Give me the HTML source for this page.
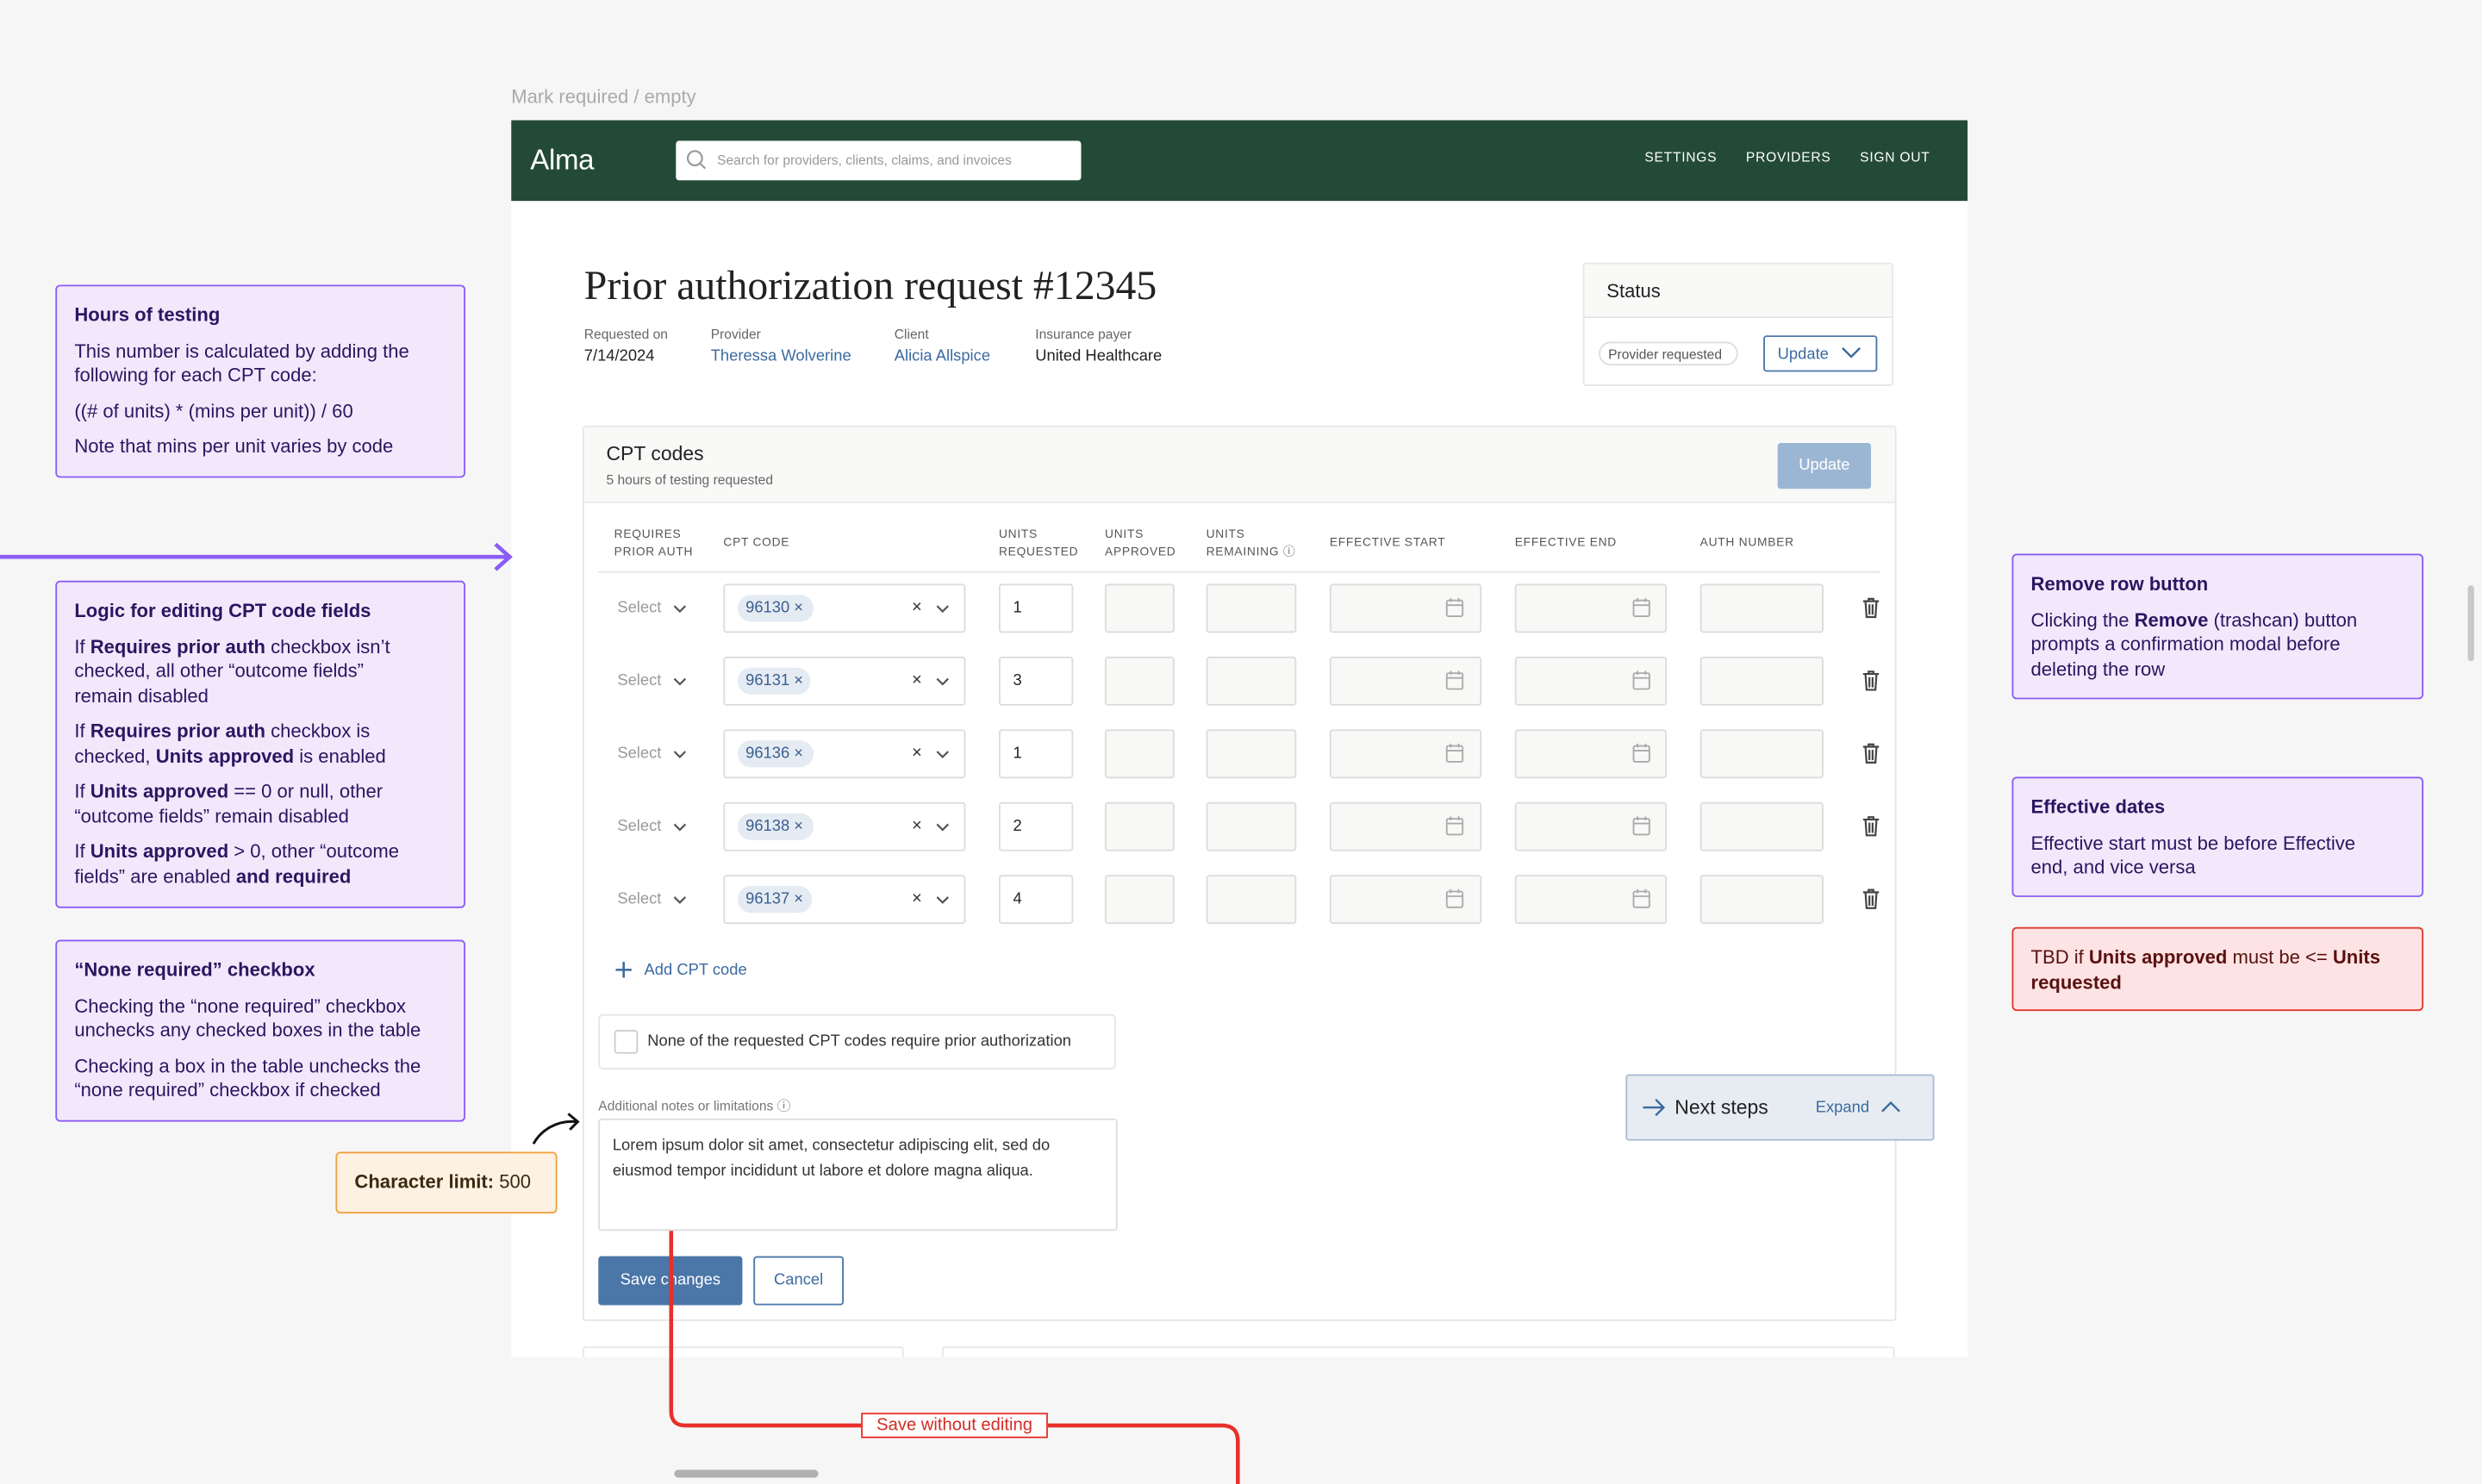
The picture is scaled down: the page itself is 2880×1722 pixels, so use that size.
<!DOCTYPE html>
<html><head><meta charset="utf-8">
<style>
*{box-sizing:border-box;margin:0;padding:0}
html,body{width:2880px;height:1722px;overflow:hidden;background:#f6f6f6}
#w{position:absolute;left:0;top:0;width:1568px;height:938px;transform:scale(1.83674,1.83582);transform-origin:0 0;font-family:"Liberation Sans",sans-serif;color:#222}
.a{position:absolute}
.note{position:absolute;background:#f1e8fc;border:1.5px solid #8b5cf6;border-radius:3px;padding:11px 11px;color:#2a1660;font-size:12px;line-height:15.5px}
.note b{font-weight:bold}
.note .h{font-weight:bold;margin-bottom:7px}
.note p{margin-bottom:7px}
.fld{position:absolute;height:31px;border:1px solid #dcdcdc;border-radius:2px;background:#f8f8f7}
.wh{background:#fff}
.th{position:absolute;font-size:7.5px;letter-spacing:.4px;color:#555;line-height:11px}
.sel{position:absolute;left:390px;top:10px;font-size:10px;color:#999}
.num{position:absolute;left:640px;top:10px;font-size:10px}
</style></head><body><div id="w">

<div class="a" style="left:323px;top:54px;font-size:12px;color:#aaa">Mark required / empty</div>

<div class="a" style="left:323px;top:76px;width:920px;height:782px;background:#fff"></div>
<div class="a" style="left:323px;top:76px;width:920px;height:51px;background:#234a36"></div>
<div class="a" style="left:335px;top:91px;font-size:18px;color:#fff;letter-spacing:-.2px;font-weight:300">Alma</div>
<div class="a" style="left:427px;top:89px;width:256px;height:25px;background:#fff;border-radius:2px"></div>
<svg class="a" style="left:433px;top:94px" width="14" height="14" viewBox="0 0 14 14"><circle cx="6" cy="6" r="4.5" fill="none" stroke="#999" stroke-width="1.2"/><path d="M9.3 9.3L12.5 12.5" stroke="#999" stroke-width="1.2"/></svg>
<div class="a" style="left:453px;top:96px;font-size:8.5px;color:#999">Search for providers, clients, claims, and invoices</div>
<div class="a" style="left:1039px;top:94px;font-size:8.5px;color:#fff;letter-spacing:.4px">SETTINGS</div>
<div class="a" style="left:1103px;top:94px;font-size:8.5px;color:#fff;letter-spacing:.4px">PROVIDERS</div>
<div class="a" style="left:1175px;top:94px;font-size:8.5px;color:#fff;letter-spacing:.4px">SIGN OUT</div>

<div class="a" style="left:369px;top:166px;font-family:'Liberation Serif',serif;font-size:26px;color:#222">Prior authorization request #12345</div>
<div class="a" style="left:369px;top:206px;font-size:8.5px;color:#666">Requested on</div>
<div class="a" style="left:369px;top:220px;font-size:10px">7/14/2024</div>
<div class="a" style="left:449px;top:206px;font-size:8.5px;color:#666">Provider</div>
<div class="a" style="left:449px;top:220px;font-size:10px;color:#3a6aa0">Theressa Wolverine</div>
<div class="a" style="left:565px;top:206px;font-size:8.5px;color:#666">Client</div>
<div class="a" style="left:565px;top:220px;font-size:10px;color:#3a6aa0">Alicia Allspice</div>
<div class="a" style="left:654px;top:206px;font-size:8.5px;color:#666">Insurance payer</div>
<div class="a" style="left:654px;top:220px;font-size:10px">United Healthcare</div>

<div class="a" style="left:1000px;top:166px;width:196px;height:78px;border:1px solid #e6e6e6;border-radius:2px;background:#fff"></div>
<div class="a" style="left:1001px;top:167px;width:194px;height:34px;background:#f9f9f8;border-bottom:1px solid #e6e6e6"></div>
<div class="a" style="left:1015px;top:177px;font-size:12px;color:#222">Status</div>
<div class="a" style="left:1010px;top:216px;width:88px;height:15px;border:1px solid #ddd;border-radius:8px;font-size:8.5px;color:#555;padding:2px 0 0 5px">Provider requested</div>
<div class="a" style="left:1114px;top:212px;width:72px;height:23px;border:1px solid #4a76a8;border-radius:2px;font-size:10px;color:#3a6aa0;padding:6px 0 0 8px">Update</div>
<svg class="a" style="left:1163px;top:218px" width="13" height="10"><path d="M1 2L6.5 7.5L12 2" fill="none" stroke="#3a6aa0" stroke-width="1.3"/></svg>

<div class="a" style="left:368px;top:269px;width:830px;height:566px;border:1px solid #e6e6e6;border-radius:2px;background:#fff"></div>
<div class="a" style="left:369px;top:270px;width:828px;height:48px;background:#f9f9f8;border-bottom:1px solid #e8e8e8"></div>
<div class="a" style="left:383px;top:280px;font-size:12.5px;color:#222">CPT codes</div>
<div class="a" style="left:383px;top:298px;font-size:8.5px;color:#666">5 hours of testing requested</div>
<div class="a" style="left:1123px;top:280px;width:59px;height:29px;background:#9bb6d3;border-radius:2px;color:#fff;font-size:10px;text-align:center;line-height:30px">Update</div>

<div class="th" style="left:388px;top:332px">REQUIRES<br>PRIOR AUTH</div>
<div class="th" style="left:457px;top:337px">CPT CODE</div>
<div class="th" style="left:631px;top:332px">UNITS<br>REQUESTED</div>
<div class="th" style="left:698px;top:332px">UNITS<br>APPROVED</div>
<div class="th" style="left:762px;top:332px">UNITS<br>REMAINING &#9432;</div>
<div class="th" style="left:840px;top:337px">EFFECTIVE START</div>
<div class="th" style="left:957px;top:337px">EFFECTIVE END</div>
<div class="th" style="left:1074px;top:337px">AUTH NUMBER</div>
<div class="a" style="left:378px;top:361px;width:810px;height:1px;background:#e4e4e4"></div>

<svg width="0" height="0" style="position:absolute"><defs>
<g id="cal"><rect x="1" y="2.5" width="10" height="10" rx="1" fill="none" stroke="#aaa" stroke-width="1"/><path d="M1 5.5H11M3.5 1V3.5M8.5 1V3.5" stroke="#aaa" stroke-width="1"/></g>
<g id="tr"><path d="M1 3H11M4.5 3V1.5H7.5V3M2.5 3L3.2 13H8.8L9.5 3M5 5V11.5M7 5V11.5" fill="none" stroke="#444" stroke-width="1.2"/></g>
<g id="chev"><path d="M1 1L4.5 4.5L8 1" fill="none" stroke="#555" stroke-width="1.2"/></g>
</defs></svg>

<div class="a" style="left:0;top:369px;width:1568px;height:31px">
 <div class="sel">Select</div><svg class="a" style="left:425px;top:13px" width="9" height="6"><use href="#chev"/></svg>
 <div class="fld wh" style="left:457px;width:153px"></div>
 <div class="a" style="left:466px;top:7px;width:48px;height:17px;background:#e5ebf3;border-radius:9px;font-size:10px;color:#3a5f8f;padding:3px 0 0 5px">96130 ×</div>
 <div class="a" style="left:576px;top:9px;font-size:11px;color:#333">×</div><svg class="a" style="left:591px;top:13px" width="9" height="6"><use href="#chev"/></svg>
 <div class="fld wh" style="left:631px;width:47px"></div><div class="num">1</div>
 <div class="fld" style="left:698px;width:44px"></div><div class="fld" style="left:762px;width:57px"></div>
 <div class="fld" style="left:840px;width:96px"></div><svg class="a" style="left:913px;top:8px" width="12" height="14"><use href="#cal"/></svg>
 <div class="fld" style="left:957px;width:96px"></div><svg class="a" style="left:1031px;top:8px" width="12" height="14"><use href="#cal"/></svg>
 <div class="fld" style="left:1074px;width:78px"></div><svg class="a" style="left:1176px;top:8px" width="12" height="14"><use href="#tr"/></svg>
</div>
<div class="a" style="left:0;top:415px;width:1568px;height:31px">
 <div class="sel">Select</div><svg class="a" style="left:425px;top:13px" width="9" height="6"><use href="#chev"/></svg>
 <div class="fld wh" style="left:457px;width:153px"></div>
 <div class="a" style="left:466px;top:7px;width:46px;height:17px;background:#e5ebf3;border-radius:9px;font-size:10px;color:#3a5f8f;padding:3px 0 0 5px">96131 ×</div>
 <div class="a" style="left:576px;top:9px;font-size:11px;color:#333">×</div><svg class="a" style="left:591px;top:13px" width="9" height="6"><use href="#chev"/></svg>
 <div class="fld wh" style="left:631px;width:47px"></div><div class="num">3</div>
 <div class="fld" style="left:698px;width:44px"></div><div class="fld" style="left:762px;width:57px"></div>
 <div class="fld" style="left:840px;width:96px"></div><svg class="a" style="left:913px;top:8px" width="12" height="14"><use href="#cal"/></svg>
 <div class="fld" style="left:957px;width:96px"></div><svg class="a" style="left:1031px;top:8px" width="12" height="14"><use href="#cal"/></svg>
 <div class="fld" style="left:1074px;width:78px"></div><svg class="a" style="left:1176px;top:8px" width="12" height="14"><use href="#tr"/></svg>
</div>
<div class="a" style="left:0;top:461px;width:1568px;height:31px">
 <div class="sel">Select</div><svg class="a" style="left:425px;top:13px" width="9" height="6"><use href="#chev"/></svg>
 <div class="fld wh" style="left:457px;width:153px"></div>
 <div class="a" style="left:466px;top:7px;width:48px;height:17px;background:#e5ebf3;border-radius:9px;font-size:10px;color:#3a5f8f;padding:3px 0 0 5px">96136 ×</div>
 <div class="a" style="left:576px;top:9px;font-size:11px;color:#333">×</div><svg class="a" style="left:591px;top:13px" width="9" height="6"><use href="#chev"/></svg>
 <div class="fld wh" style="left:631px;width:47px"></div><div class="num">1</div>
 <div class="fld" style="left:698px;width:44px"></div><div class="fld" style="left:762px;width:57px"></div>
 <div class="fld" style="left:840px;width:96px"></div><svg class="a" style="left:913px;top:8px" width="12" height="14"><use href="#cal"/></svg>
 <div class="fld" style="left:957px;width:96px"></div><svg class="a" style="left:1031px;top:8px" width="12" height="14"><use href="#cal"/></svg>
 <div class="fld" style="left:1074px;width:78px"></div><svg class="a" style="left:1176px;top:8px" width="12" height="14"><use href="#tr"/></svg>
</div>
<div class="a" style="left:0;top:507px;width:1568px;height:31px">
 <div class="sel">Select</div><svg class="a" style="left:425px;top:13px" width="9" height="6"><use href="#chev"/></svg>
 <div class="fld wh" style="left:457px;width:153px"></div>
 <div class="a" style="left:466px;top:7px;width:48px;height:17px;background:#e5ebf3;border-radius:9px;font-size:10px;color:#3a5f8f;padding:3px 0 0 5px">96138 ×</div>
 <div class="a" style="left:576px;top:9px;font-size:11px;color:#333">×</div><svg class="a" style="left:591px;top:13px" width="9" height="6"><use href="#chev"/></svg>
 <div class="fld wh" style="left:631px;width:47px"></div><div class="num">2</div>
 <div class="fld" style="left:698px;width:44px"></div><div class="fld" style="left:762px;width:57px"></div>
 <div class="fld" style="left:840px;width:96px"></div><svg class="a" style="left:913px;top:8px" width="12" height="14"><use href="#cal"/></svg>
 <div class="fld" style="left:957px;width:96px"></div><svg class="a" style="left:1031px;top:8px" width="12" height="14"><use href="#cal"/></svg>
 <div class="fld" style="left:1074px;width:78px"></div><svg class="a" style="left:1176px;top:8px" width="12" height="14"><use href="#tr"/></svg>
</div>
<div class="a" style="left:0;top:553px;width:1568px;height:31px">
 <div class="sel">Select</div><svg class="a" style="left:425px;top:13px" width="9" height="6"><use href="#chev"/></svg>
 <div class="fld wh" style="left:457px;width:153px"></div>
 <div class="a" style="left:466px;top:7px;width:47px;height:17px;background:#e5ebf3;border-radius:9px;font-size:10px;color:#3a5f8f;padding:3px 0 0 5px">96137 ×</div>
 <div class="a" style="left:576px;top:9px;font-size:11px;color:#333">×</div><svg class="a" style="left:591px;top:13px" width="9" height="6"><use href="#chev"/></svg>
 <div class="fld wh" style="left:631px;width:47px"></div><div class="num">4</div>
 <div class="fld" style="left:698px;width:44px"></div><div class="fld" style="left:762px;width:57px"></div>
 <div class="fld" style="left:840px;width:96px"></div><svg class="a" style="left:913px;top:8px" width="12" height="14"><use href="#cal"/></svg>
 <div class="fld" style="left:957px;width:96px"></div><svg class="a" style="left:1031px;top:8px" width="12" height="14"><use href="#cal"/></svg>
 <div class="fld" style="left:1074px;width:78px"></div><svg class="a" style="left:1176px;top:8px" width="12" height="14"><use href="#tr"/></svg>
</div>

<svg class="a" style="left:388px;top:607px" width="12" height="12"><path d="M6 1V11M1 6H11" stroke="#3a6aa0" stroke-width="1.4"/></svg>
<div class="a" style="left:407px;top:608px;font-size:10px;color:#3a6aa0">Add CPT code</div>

<div class="a" style="left:378px;top:641px;width:327px;height:35px;border:1px solid #e6e6e6;border-radius:3px"></div>
<div class="a" style="left:388px;top:651px;width:15px;height:15px;border:1px solid #ccc;border-radius:2px"></div>
<div class="a" style="left:409px;top:653px;font-size:10px;color:#333">None of the requested CPT codes require prior authorization</div>

<div class="a" style="left:378px;top:693px;font-size:8.5px;color:#777">Additional notes or limitations &#9432;</div>
<div class="a" style="left:378px;top:707px;width:328px;height:71px;border:1px solid #ddd;border-radius:2px;padding:9px 8px;font-size:10px;line-height:16px;color:#333">Lorem ipsum dolor sit amet, consectetur adipiscing elit, sed do eiusmod tempor incididunt ut labore et dolore magna aliqua.</div>

<div class="a" style="left:378px;top:794px;width:91px;height:31px;background:#4a76a8;border-radius:2px;color:#fff;font-size:10px;text-align:center;line-height:32px">Save changes</div>
<div class="a" style="left:476px;top:794px;width:57px;height:31px;border:1px solid #4a76a8;border-radius:2px;color:#3a6aa0;font-size:10px;text-align:center;line-height:30px">Cancel</div>

<div class="a" style="left:368px;top:851px;width:203px;height:7px;border:1px solid #e6e6e6;border-bottom:none;border-radius:2px 2px 0 0"></div>
<div class="a" style="left:595px;top:851px;width:602px;height:7px;border:1px solid #e6e6e6;border-bottom:none;border-radius:2px 2px 0 0"></div>

<div class="a" style="left:1027px;top:679px;width:195px;height:42px;background:#e7ebf2;border:1px solid #a9bcd4;border-radius:2px"></div>
<svg class="a" style="left:1037px;top:693px" width="16" height="14"><path d="M1 7H14M9 2L14 7L9 12" fill="none" stroke="#3a6aa0" stroke-width="1.3"/></svg>
<div class="a" style="left:1058px;top:693px;font-size:12.5px;color:#222">Next steps</div>
<div class="a" style="left:1147px;top:695px;font-size:10px;color:#3a6aa0">Expand</div>
<svg class="a" style="left:1188px;top:695px" width="13" height="9"><path d="M1 7.5L6.5 2L12 7.5" fill="none" stroke="#3a6aa0" stroke-width="1.3"/></svg>

<div class="note" style="left:35px;top:180px;width:259px;height:122px">
<div class="h">Hours of testing</div>
<p>This number is calculated by adding the following for each CPT code:</p>
<p>((# of units) * (mins per unit)) / 60</p>
<p>Note that mins per unit varies by code</p></div>

<svg class="a" style="left:0;top:340px" width="330" height="24"><path d="M0 12H322M313 4L322 12L313 20" fill="none" stroke="#8b5cf6" stroke-width="2.5"/></svg>

<div class="note" style="left:35px;top:367px;width:259px;height:207px;padding-right:24px">
<div class="h">Logic for editing CPT code fields</div>
<p>If <b>Requires prior auth</b> checkbox isn’t checked, all other “outcome fields” remain disabled</p>
<p>If <b>Requires prior auth</b> checkbox is checked, <b>Units approved</b> is enabled</p>
<p>If <b>Units approved</b> == 0 or null, other “outcome fields” remain disabled</p>
<p>If <b>Units approved</b> &gt; 0, other “outcome fields” are enabled <b>and required</b></p></div>

<div class="note" style="left:35px;top:594px;width:259px;height:115px">
<div class="h">“None required” checkbox</div>
<p>Checking the “none required” checkbox unchecks any checked boxes in the table</p>
<p>Checking a box in the table unchecks the “none required” checkbox if checked</p></div>

<div class="a" style="left:212px;top:728px;width:140px;height:39px;background:#fdf1e2;border:1.5px solid #f0a040;border-radius:3px;font-size:12px;color:#3a2a10;padding:11px 0 0 11px"><b>Character limit:</b> 500</div>
<svg class="a" style="left:334px;top:700px" width="36" height="26"><path d="M3 23C8 14 18 8 30 9M25 4L31 9L26 14" fill="none" stroke="#111" stroke-width="1.6"/></svg>

<div class="note" style="left:1271px;top:350px;width:260px;height:92px">
<div class="h">Remove row button</div>
<p>Clicking the <b>Remove</b> (trashcan) button prompts a confirmation modal before deleting the row</p></div>
<div class="note" style="left:1271px;top:491px;width:260px;height:76px;padding-right:20px">
<div class="h">Effective dates</div>
<p>Effective start must be before Effective end, and vice versa</p></div>
<div class="note" style="left:1271px;top:586px;width:260px;height:53px;background:#fde3e3;border-color:#e03a30;color:#5a1010;padding-top:11px">TBD if <b>Units approved</b> must be &lt;= <b>Units requested</b></div>

<svg class="a" style="left:0;top:0" width="1568" height="938"><path d="M424 778V892Q424 901 433 901H772Q782 901 782 911V938" fill="none" stroke="#e8302a" stroke-width="2.5"/></svg>
<div class="a" style="left:544px;top:893px;width:118px;height:16px;background:#fff;border:1px solid #e8302a;font-size:11px;color:#d42a24;text-align:center;line-height:14px">Save without editing</div>

<div class="a" style="left:426px;top:929px;width:91px;height:5px;border-radius:3px;background:#b0b0b0"></div>
<div class="a" style="left:1559px;top:370px;width:4px;height:48px;border-radius:2px;background:#c8c8c8"></div>

</div></body></html>
